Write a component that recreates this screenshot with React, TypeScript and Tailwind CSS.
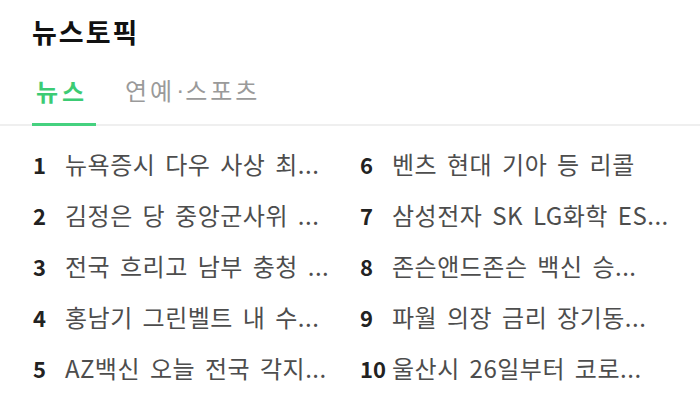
const font = { fontFamily: '"Noto Sans CJK KR", "Noto Sans", sans-serif' };

const leftItems = [
  "뉴욕증시 다우 사상 최...",
  "김정은 당 중앙군사위 ...",
  "전국 흐리고 남부 충청 ...",
  "홍남기 그린벨트 내 수...",
  "AZ백신 오늘 전국 각지...",
];

const rightItems = [
  "벤츠 현대 기아 등 리콜",
  "삼성전자 SK LG화학 ES...",
  "존슨앤드존슨 백신 승...",
  "파월 의장 금리 장기동...",
  "울산시 26일부터 코로...",
];

function Row({ n, t }: { n: number; t: string }) {
  return (
    <li className="flex items-center h-[51px] whitespace-nowrap">
      <span className="min-w-[27px] mr-[5px] text-[22px] font-bold text-[#222] leading-[30px]">{n}</span>
      <span className="text-[24px] text-[#4d4d4d] leading-[30px] tracking-[0.5px] [word-spacing:4px]">{t}</span>
    </li>
  );
}

export default function App() {
  return (
    <div className="w-[700px] h-[400px] bg-white overflow-hidden" style={font}>
      <h2 className="pl-[32px] pt-[14px] text-[27px] font-bold text-[#111] leading-[36px] tracking-[2px]">뉴스토픽</h2>
      <div className="mt-[25px] flex items-end border-b-2 border-[#efefef] pl-[32px]">
        <div className="-mb-[2px] w-[64px] border-b-[3px] border-[#45d17f] pb-[17px] pl-[4px]">
          <span className="text-[24px] font-bold tracking-[4px] text-[#3ccb74] leading-[30px]">뉴스</span>
        </div>
        <div className="ml-[29px] pb-[17px] text-[24px] tracking-[3px] text-[#9a9a9a] leading-[30px]">
          연예<span className="relative -top-[2px] tracking-normal mx-[1px]" style={{ fontFamily: '"Liberation Sans", sans-serif' }}>·</span>스포츠
        </div>
      </div>
      <div className="flex pl-[33px] pt-[12px]">
        <ul className="w-[327px]">
          {leftItems.map((t, i) => (
            <Row key={i} n={i + 1} t={t} />
          ))}
        </ul>
        <ul>
          {rightItems.map((t, i) => (
            <Row key={i} n={i + 6} t={t} />
          ))}
        </ul>
      </div>
    </div>
  );
}
